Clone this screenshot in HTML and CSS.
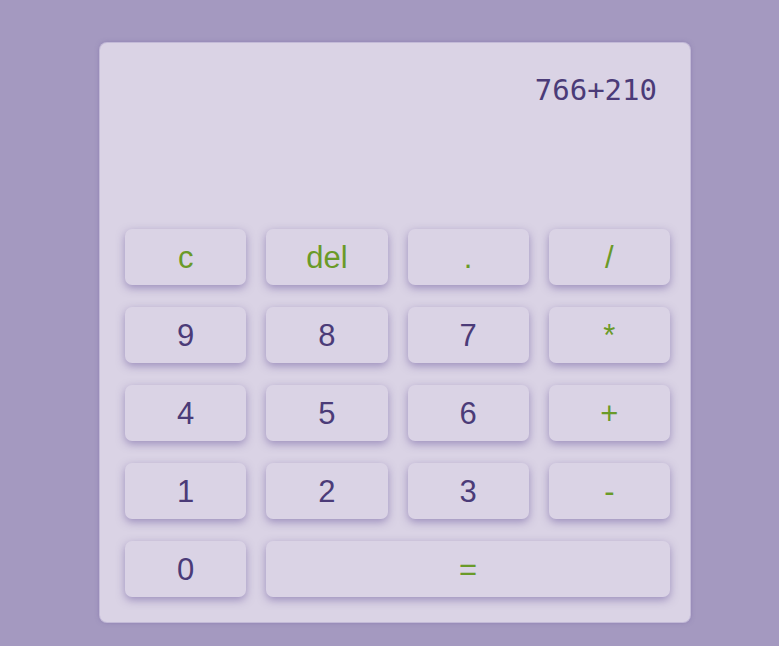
FILE: index.html
```html
<!DOCTYPE html>
<html>
<head>
<meta charset="utf-8">
<link rel="stylesheet" href="styles.css">
</head>
<body>
<div class="page">
  <div class="calc">
    <div class="display">766+210</div>
    <div class="keys">
      <button class="key op">c</button>
      <button class="key op">del</button>
      <button class="key op">.</button>
      <button class="key op">/</button>
      <button class="key">9</button>
      <button class="key">8</button>
      <button class="key">7</button>
      <button class="key op">*</button>
      <button class="key">4</button>
      <button class="key">5</button>
      <button class="key">6</button>
      <button class="key op">+</button>
      <button class="key">1</button>
      <button class="key">2</button>
      <button class="key">3</button>
      <button class="key op">-</button>
      <button class="key">0</button>
      <button class="key op wide">=</button>
    </div>
  </div>
</div>
</body>
</html>
```

FILE: styles.css
```css
html, body {
  margin: 0;
  padding: 0;
  background: #a499c0;
  width: 779px;
  height: 646px;
  overflow: hidden;
}
.page {
  padding: 43px 0 0 100px;
}
.calc {
  box-sizing: border-box;
  width: 590px;
  height: 579px;
  background: #dad3e5;
  border-radius: 7px;
  box-shadow: 0 0 0 1px rgba(225, 218, 236, 0.6), 0 0 5px rgba(100, 80, 150, 0.5);
  padding: 0 20px 25px 25px;
}
.display {
  box-sizing: border-box;
  height: 186px;
  padding: 32px 13px 0 0;
  text-align: right;
  font-family: "DejaVu Sans Mono", monospace;
  font-size: 29px;
  line-height: 30px;
  color: #4b3b78;
}
.keys {
  display: grid;
  grid-template-columns: repeat(4, 1fr);
  grid-auto-rows: 56px;
  column-gap: 20px;
  row-gap: 22px;
}
.key {
  border: none;
  margin: 0;
  padding: 2px 0 0 0;
  background: #dad3e5;
  border-radius: 7px;
  box-shadow: 0 3px 9px rgba(95, 75, 150, 0.5);
  font-family: "Liberation Sans", Arial, sans-serif;
  font-size: 31px;
  color: #4b3b78;
  display: flex;
  align-items: center;
  justify-content: center;
}
.op {
  color: #6a9a28;
}
.wide {
  grid-column: span 3;
}
```
